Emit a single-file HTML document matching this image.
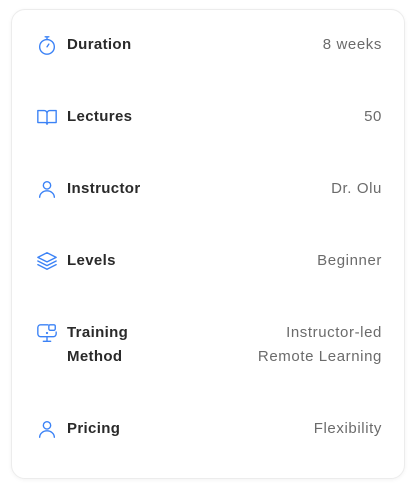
<!DOCTYPE html>
<html><head><meta charset="utf-8"><style>
*{margin:0;padding:0;box-sizing:border-box}
body{width:416px;height:492px;background:#fff;font-family:"Liberation Sans",sans-serif;position:relative;overflow:hidden}
.card{position:absolute;left:11px;top:9px;width:394px;height:470px;border:1px solid #ececec;border-radius:14px;box-shadow:0 1px 4px rgba(0,0,0,.05);background:#fff}
.row{position:absolute;left:0;width:100%}
.ic{position:absolute;left:24px;width:22px;height:22px}
.lb{position:absolute;left:55px;font-size:15px;font-weight:600;color:#2a2a2a;line-height:24px;letter-spacing:.35px}
.vl{position:absolute;right:22px;font-size:15px;color:#6b6b6b;line-height:24px;text-align:right;letter-spacing:.6px}
svg{fill:none;stroke:#3b82f6;stroke-width:1.5;stroke-linecap:round;stroke-linejoin:round}
</style></head><body>
<div class="card">
 <div class="row" style="top:23px">
  <svg class="ic" style="top:1px" viewBox="0 0 24 24"><circle cx="12" cy="14" r="8"/><path d="M10 3h4M12 3v3M12 14l2-3"/></svg>
  <div class="lb">Duration</div><div class="vl">8 weeks</div></div>
 <div class="row" style="top:95px">
  <svg class="ic" style="top:1px" viewBox="0 0 24 24"><path d="M2 5h7a3 3 0 0 1 3 3v12a2 2 0 0 0-2-2H2zM22 5h-7a3 3 0 0 0-3 3v12a2 2 0 0 1 2-2h8z"/></svg>
  <div class="lb">Lectures</div><div class="vl">50</div></div>
 <div class="row" style="top:167px">
  <svg class="ic" style="top:1px" viewBox="0 0 24 24"><circle cx="12" cy="8" r="4"/><path d="M4 21a8 7 0 0 1 16 0"/></svg>
  <div class="lb">Instructor</div><div class="vl">Dr. Olu</div></div>
 <div class="row" style="top:239px">
  <svg class="ic" style="top:1px" viewBox="0 0 24 24"><path d="M12 3l10 5-10 5-10-5z"/><path d="M2 12l10 5 10-5M2 16l10 5 10-5"/></svg>
  <div class="lb">Levels</div><div class="vl">Beginner</div></div>
 <div class="row" style="top:311px">
  <svg class="ic" style="top:1px" viewBox="0 0 24 24"><path d="M13 3H5a3 3 0 0 0-3 3v7a3 3 0 0 0 3 3h14a3 3 0 0 0 3-3v-2M12 16v5M8 21h8"/><rect x="14" y="3" width="7" height="6" rx="1.5"/><circle cx="12" cy="12" r=".5"/></svg>
  <div class="lb">Training<br>Method</div><div class="vl">Instructor-led<br>Remote Learning</div></div>
 <div class="row" style="top:407px">
  <svg class="ic" style="top:1px" viewBox="0 0 24 24"><circle cx="12" cy="8" r="4"/><path d="M4 21a8 7 0 0 1 16 0"/></svg>
  <div class="lb">Pricing</div><div class="vl">Flexibility</div></div>
</div>
</body></html>
